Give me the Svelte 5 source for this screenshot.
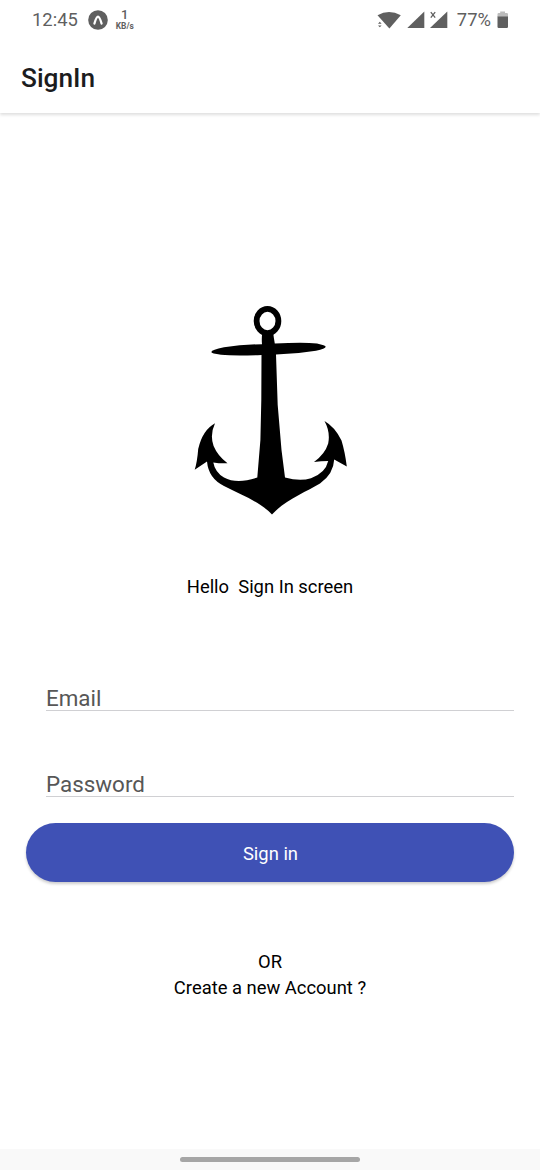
<script>
  const fields = [
    { label: 'Email', type: 'email' },
    { label: 'Password', type: 'password' }
  ];
</script>

<div class="screen">
  <div class="status">
    <span class="time">12:45</span>
    <svg class="app-icon" width="20" height="20" viewBox="0 0 20 20">
      <circle cx="10" cy="10" r="9.8" fill="#5f5f5f" />
      <path d="M6.4 13.6Q8.4 6.6 10 6.6T13.6 13.6" fill="none" stroke="#fff" stroke-width="2.2" stroke-linecap="round" />
    </svg>
    <span class="speed"><b>1</b><small>KB/s</small></span>
    <span class="spacer"></span>
    <svg class="signals" width="74" height="24" viewBox="375 8 74 24" fill="#5f5f5f">
      <path d="M377.5 15.2Q389 8.8 400.8 15.2L389.4 28.6Z" />
      <path d="M378 23.8L379.8 21.8L381.6 23.8ZM378 25.4H381.6L379.8 27.3Z" stroke="#fff" stroke-width="1.2" paint-order="stroke" />
      <path d="M424.3 11.6V28H407.3Z" />
      <path d="M447.3 11.6V28H430Z" />
      <path d="M430.8 12.2L435.2 17.6M435.2 12.2L430.8 17.6" stroke="#5f5f5f" stroke-width="1.3" />
    </svg>
    <span class="percent">77%</span>
    <svg class="battery" width="12" height="18" viewBox="0 0 12 18">
      <path d="M3.2 .5H8V2H9.8Q11 2 11 3.2V6H.5V3.2Q.5 2 1.7 2H3.2Z" fill="#bcbcbc" />
      <path d="M.5 5.5H11V15.8Q11 17 9.8 17H1.7Q.5 17 .5 15.8Z" fill="#5f5f5f" />
    </svg>
  </div>

  <header><h1>SignIn</h1></header>

  <main>
    <svg class="anchor" width="160" height="220" viewBox="190 300 160 220">
      <ellipse cx="267.5" cy="321" rx="10.9" ry="12.1" fill="none" stroke="#000" stroke-width="5.8" />
      <path d="M262.4 333H273.2Q273.8 338 274.8 343.6Q302 341.8 317 343.4Q325.7 345.2 325.7 346.8Q325.5 348.6 316 350.8Q297 354 276 354.6L277.7 405L281.5 450L285 477.5Q300 481.6 311 478.2Q325.5 473 328.2 461Q321 461 314 462Q325 454 328.2 443.5Q330.5 432 324.5 421Q335 427 341.5 440.5Q345 452 346.8 466.5L334.2 459.5Q333.5 474 320 483.5C306 492 285 500 272 514.5C260 502 243 495.5 224 486Q208.5 478.5 207 461.6L194.7 469.8Q197.2 462 198.2 449Q202.5 430 215 423.2Q209.6 435 213.6 446Q217.8 456 227.5 463.2Q221 463.7 213.3 462.4Q215 472 224 477.5Q237 484.5 257.3 477.5L260.4 440L261.3 400L261.5 355Q235 356 221 354.8Q211.3 353.2 211.3 351.9Q211.6 349.8 224 347.2Q242 344.4 262 344.2Q261.4 337 262.4 333Z" />
    </svg>

    <p class="hello">Hello&nbsp; Sign In screen</p>

    <form onsubmit={(e) => e.preventDefault()}>
      <div class="fields">
        {#each fields as field}
          <input type={field.type} placeholder={field.label} aria-label={field.label} />
        {/each}
      </div>
      <button type="submit">Sign in</button>
    </form>

    <p class="alt">OR<br />Create a new Account ?</p>
  </main>

  <div class="nav"><span></span></div>
</div>

<style>
  :global(body) { background: #fff; }
  .screen {
    width: 540px;
    height: 1170px;
    display: flex;
    flex-direction: column;
    overflow: hidden;
    background: #fff;
    color: #000;
    font-family: Roboto, sans-serif;
  }
  .status {
    height: 40px;
    flex: none;
    box-sizing: border-box;
    padding: 0 31px 0 32px;
    display: flex;
    align-items: center;
    color: #5f5f5f;
    font-size: 18.4px;
  }
  .time, .percent { padding-bottom: 2px; }
  .app-icon { margin-left: 10px; }
  .speed {
    width: 20px;
    margin-left: 7px;
    display: flex;
    flex-direction: column;
    align-items: center;
    line-height: 1;
  }
  .speed b { font-size: 13px; line-height: 12px; font-weight: 500; }
  .speed small { font-size: 8.4px; line-height: 10px; font-weight: 700; }
  .spacer { flex: 1; }
  .percent { margin-left: 8px; }
  .battery { margin-left: 6px; }
  header {
    height: 73px;
    flex: none;
    box-sizing: border-box;
    padding-left: 21px;
    box-shadow: 0 2px 3px rgba(0, 0, 0, .13);
    clip-path: inset(0 0 -8px 0);
  }
  h1 {
    margin: 0;
    padding-top: 22px;
    font-size: 26.25px;
    line-height: 32px;
    font-weight: 500;
    color: #1c1c1e;
  }
  main {
    flex: 1;
    display: flex;
    flex-direction: column;
    align-items: center;
    padding: 187px 26px 0;
  }
  .anchor { flex: none; }
  p { margin: 0; font-size: 18.4px; line-height: 26px; text-align: center; }
  .hello { margin-top: 54px; }
  form { width: 488px; margin-top: 71px; }
  .fields {
    display: grid;
    gap: 46px;
    padding-left: 20px;
  }
  input {
    width: 100%;
    height: 40px;
    box-sizing: border-box;
    padding: 14px 0 0;
    border: 0;
    border-bottom: 1px solid #d0d0d3;
    border-radius: 0;
    background: transparent;
    font: 22.4px Roboto, sans-serif;
    outline: none;
  }
  input::placeholder { color: #575757; opacity: 1; }
  button {
    display: block;
    width: 100%;
    height: 59px;
    margin-top: 26.4px;
    padding: 1px 0 0 1px;
    border: 0;
    border-radius: 30px;
    background: #3f51b5;
    color: #fff;
    font: 18.4px Roboto, sans-serif;
    box-shadow: 0 2px 3px rgba(0, 0, 0, .2);
  }
  .alt { margin-top: 66.6px; }
  .nav {
    height: 21px;
    flex: none;
    background: #f9f9f9;
    display: flex;
    justify-content: center;
    align-items: center;
  }
  .nav span { width: 180px; height: 5px; border-radius: 3px; background: #a6a6a6; }
</style>
